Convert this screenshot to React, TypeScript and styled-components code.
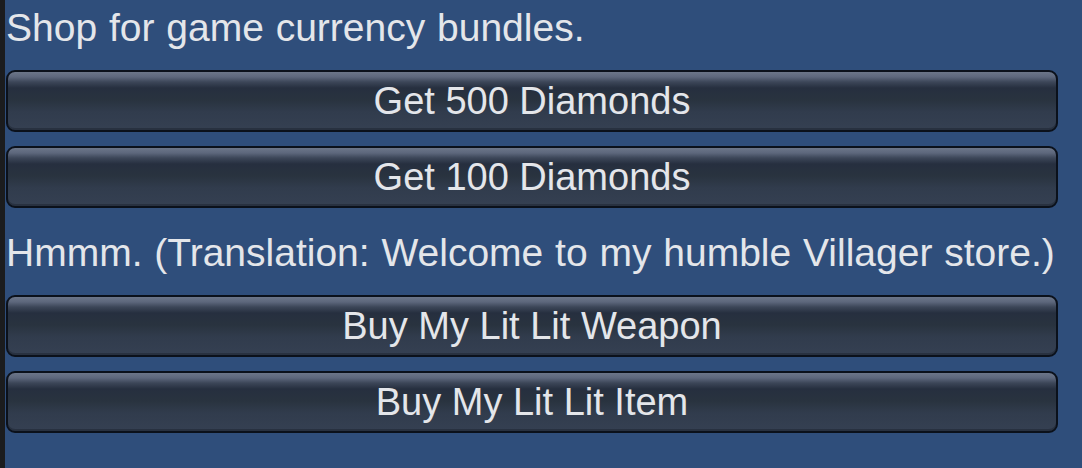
import React from "react";
import styled, { createGlobalStyle } from "styled-components";

const GlobalStyle = createGlobalStyle`
    html, body {
        margin: 0;
        padding: 0;
        background: #2f4e7b;
    }
    #root {
        height: 468px;
    }
`;

const Screen = styled.div`
    display: flex;
    width: 1082px;
    height: 468px;
    overflow: hidden;
    background: #2f4e7b;
    font-family: "Liberation Sans", Arial, sans-serif;
`;

const EdgeStrip = styled.div`
    width: 5px;
    flex: none;
    background: #1b1c1e;
`;

const Panel = styled.div`
    flex: 1;
    display: flex;
    flex-direction: column;
    padding: 3px 24px 0 1px;
`;

const Label = styled.div<{ $top: number }>`
    margin-top: ${(p) => p.$top}px;
    margin-bottom: 20px;
    padding-top: 3px;
    height: 44px;
    line-height: 44px;
    font-size: 39px;
    word-spacing: 1px;
    color: #e4e6ea;
    white-space: nowrap;
`;

const ShopButton = styled.button`
    height: 62px;
    margin-bottom: 14px;
    border: 2px solid #0b111b;
    border-radius: 9px;
    background: linear-gradient(
        to bottom,
        #6c7689 0px,
        #5d677c 5px,
        #3c4658 10px,
        #262f3f 16px,
        #29333f 28px,
        #313c4d 40px,
        #354052 100%
    );
    box-shadow: inset 0 -2px 0 #283140;
    color: #e4e6ea;
    font-family: "Liberation Sans", Arial, sans-serif;
    font-size: 38px;
    line-height: 1;
    padding: 0 0 1px;
    cursor: pointer;
`;

type Section = {
    title: string;
    items: string[];
};

const sections: Section[] = [
    { title: "Shop for game currency bundles.", items: ["Get 500 Diamonds", "Get 100 Diamonds"] },
    { title: "Hmmm. (Translation: Welcome to my humble Villager store.)", items: ["Buy My Lit Lit Weapon", "Buy My Lit Lit Item"] },
];

export default function App() {
    return (
        <>
            <GlobalStyle />
            <Screen>
                <EdgeStrip />
                <Panel>
                    {sections.map((section, idx) => (
                        <React.Fragment key={section.title}>
                            <Label $top={idx === 0 ? 0 : 6}>{section.title}</Label>
                            {section.items.map((item) => (
                                <ShopButton key={item}>{item}</ShopButton>
                            ))}
                        </React.Fragment>
                    ))}
                </Panel>
            </Screen>
        </>
    );
}
